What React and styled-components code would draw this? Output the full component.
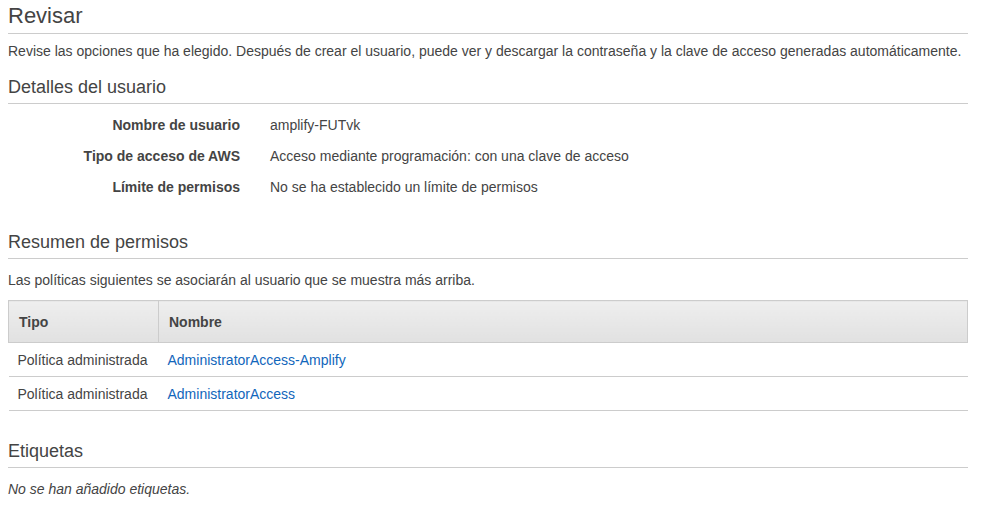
import React from 'react';
import styled, {createGlobalStyle} from 'styled-components';

const Global = createGlobalStyle`
body {
  margin: 0;
  background: #fff;
  font-family: "Liberation Sans", Arial, sans-serif;
  font-size: 14px;
  color: #444;
}
`

const Page = styled.div`
padding: 0 16px 0 8px;
width: 960px;
`

const Title = styled.h1`
font-size: 22px;
font-weight: normal;
margin: 0;
padding: 4px 0 5px;
line-height: 24px;
border-bottom: 1px solid #ccc;
`

const Intro = styled.p`
margin: 8px 0 0;
line-height: 18px;
`

const Section = styled.h2`
font-size: 18px;
font-weight: normal;
margin: ${p => p.top}px 0 0;
padding-bottom: 5px;
line-height: 22px;
border-bottom: 1px solid #ccc;
`

const Details = styled.div`
display: grid;
grid-template-columns: 232px 1fr;
column-gap: 30px;
row-gap: 13px;
margin-top: 12px;
line-height: 18px;
`

const Label = styled.div`
font-weight: bold;
text-align: right;
`

const Value = styled.div``

const Note = styled.p`
margin: 12px 0 0;
line-height: 18px;
font-style: ${p => p.italic ? 'italic' : 'normal'};
`

const Table = styled.table`
width: 100%;
border-collapse: collapse;
margin-top: 11px;
`

const Th = styled.th`
text-align: left;
font-weight: bold;
padding: 0 10px;
height: 41px;
border: 1px solid #ccc;
background: linear-gradient(#eeeeee, #e1e1e1);
width: ${p => p.w || 'auto'};
`

const Td = styled.td`
padding: 0 10px 0 9px;
height: 33px;
border-bottom: 1px solid #ccc;
white-space: nowrap;
`

const PolicyLink = styled.a`
color: #1166bb;
text-decoration: none;
`

const policies = ['AdministratorAccess-Amplify', 'AdministratorAccess'];

export default function App() {
  return (
    <Page>
      <Global />
      <Title>Revisar</Title>
      <Intro>Revise las opciones que ha elegido. Después de crear el usuario, puede ver y descargar la contraseña y la clave de acceso generadas automáticamente.</Intro>

      <Section top={16}>Detalles del usuario</Section>
      <Details>
        <Label>Nombre de usuario</Label>
        <Value>amplify-FUTvk</Value>
        <Label>Tipo de acceso de AWS</Label>
        <Value>Acceso mediante programación: con una clave de acceso</Value>
        <Label>Límite de permisos</Label>
        <Value>No se ha establecido un límite de permisos</Value>
      </Details>

      <Section top={35}>Resumen de permisos</Section>
      <Note>Las políticas siguientes se asociarán al usuario que se muestra más arriba.</Note>
      <Table>
        <thead>
          <tr>
            <Th w="129px">Tipo</Th>
            <Th>Nombre</Th>
          </tr>
        </thead>
        <tbody>
          {policies.map(p => (
            <tr key={p}>
              <Td>Política administrada</Td>
              <Td><PolicyLink href="#">{p}</PolicyLink></Td>
            </tr>
          ))}
        </tbody>
      </Table>

      <Section top={29}>Etiquetas</Section>
      <Note italic>No se han añadido etiquetas.</Note>
    </Page>
  );
}
